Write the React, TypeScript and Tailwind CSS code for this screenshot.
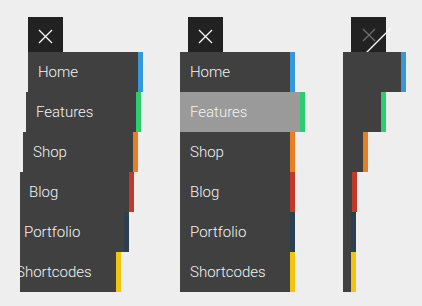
const items = [
	{ label: "Home", bar: "bg-[#3498db]" },
	{ label: "Features", bar: "bg-[#2ecc71]" },
	{ label: "Shop", bar: "bg-[#e67e22]" },
	{ label: "Blog", bar: "bg-[#c0392b]" },
	{ label: "Portfolio", bar: "bg-[#2c3e50]" },
	{ label: "Shortcodes", bar: "bg-[#f1c40f]" },
];

// panel 1: rows slide out one after another
const shifts = ["ml-[8px]", "ml-[6px]", "ml-[3px]", "ml-[-1px]", "ml-[-6px]", "ml-[-14px]"];
// panel 3: rows collapsing
const collapsed = ["w-[58px]", "w-[38px]", "w-[20px]", "w-[9px]", "w-[8px]", "w-[8px]"];

function CloseButton({ broken = false }: { broken?: boolean }) {
	return (
		<div className="ml-[8px] mt-[17px] h-[35px] w-[35px] bg-[#222222]">
			<svg width="35" height="35" viewBox="0 0 35 35" className="overflow-visible">
				{broken ? (
					<>
						<g stroke="#ffffff" strokeWidth="1.3" opacity="0.35">
							<line x1="12" y1="12" x2="24" y2="24" />
							<line x1="24" y1="12" x2="12" y2="24" />
						</g>
						<line x1="11" y1="40" x2="40" y2="11" stroke="#ffffff" strokeWidth="1.3" />
					</>
				) : (
					<g stroke="#ffffff" strokeWidth="1.3">
						<line x1="11" y1="13" x2="24" y2="26" />
						<line x1="24" y1="13" x2="11" y2="26" />
					</g>
				)}
			</svg>
		</div>
	);
}

export default function App() {
	return (
		<div
			className="flex h-[306px] w-[422px] items-start bg-[#eeeeee] text-[15px] font-light text-[#f4f4f4]"
			style={{ fontFamily: "Roboto, 'Liberation Sans', sans-serif" }}
		>
			{/* Sliding in */}
			<div className="ml-[20px] w-[123px] overflow-hidden">
				<CloseButton />
				{items.map((item, i) => (
					<div key={item.label} className={`flex h-[40px] ${shifts[i]}`}>
						<div className="flex w-[110px] shrink-0 items-center whitespace-nowrap bg-[#404040] pl-[10px]">
							{item.label}
						</div>
						<div className={`w-[5px] shrink-0 ${item.bar}`} />
					</div>
				))}
			</div>

			{/* Open, hover on Features */}
			<div className="ml-[37px] w-[125px]">
				<CloseButton />
				{items.map((item) => {
					const active = item.label === "Features";
					return (
						<div key={item.label} className="flex h-[40px]">
							<div
								className={`flex shrink-0 items-center pl-[10px] ${
									active ? "w-[120px] bg-[#9a9a9a]" : "w-[110px] bg-[#404040]"
								}`}
							>
								{item.label}
							</div>
							<div className={`w-[5px] shrink-0 ${item.bar}`} />
						</div>
					);
				})}
			</div>

			{/* Closing */}
			<div className="ml-[38px] w-[63px]">
				<CloseButton broken />
				{items.map((item, i) => (
					<div key={item.label} className="flex h-[40px]">
						<div className={`shrink-0 bg-[#404040] ${collapsed[i]}`} />
						<div className={`w-[5px] shrink-0 ${item.bar}`} />
					</div>
				))}
			</div>
		</div>
	);
}
